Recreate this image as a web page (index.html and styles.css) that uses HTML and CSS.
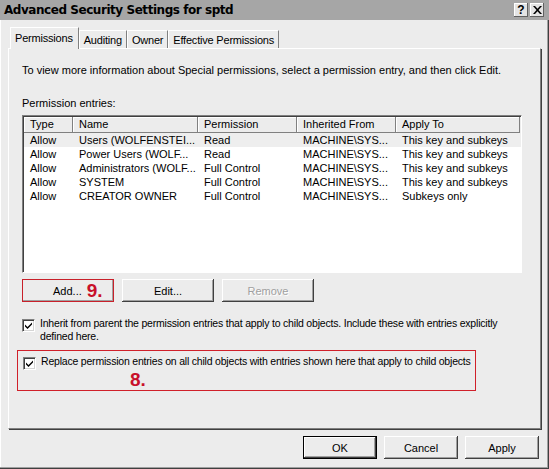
FILE: index.html
```html
<!DOCTYPE html>
<html lang="en">
<head>
    <meta charset="UTF-8">
    <meta name="viewport" content="width=device-width, initial-scale=1.0">
    <title>Advanced Security Settings for sptd</title>
    <link rel="stylesheet" href="styles.css">
</head>
<body>
    <div class="window">
        <div class="titlebar">
            <span class="title">Advanced Security Settings for sptd</span>
            <div class="caption-buttons">
                <span class="cap-btn">?</span>
                <span class="cap-btn">
                    <svg width="9" height="8" viewBox="0 0 9 8"><path d="M0 0h2l2.5 2.8L7 0h2L5.5 4 9 8H7L4.5 5.2 2 8H0l3.5-4z" fill="#000"/></svg>
                </span>
            </div>
        </div>

        <div class="tabs">
            <div class="tab active">Permissions</div>
            <div class="tab">Auditing</div>
            <div class="tab">Owner</div>
            <div class="tab">Effective Permissions</div>
        </div>

        <div class="panel">
            <p class="intro">To view more information about Special permissions, select a permission entry, and then click Edit.</p>
            <div class="label">Permission entries:</div>

            <div class="listbox">
                <div class="list-head">
                    <div class="head-cell">Type</div>
                    <div class="head-cell">Name</div>
                    <div class="head-cell">Permission</div>
                    <div class="head-cell">Inherited From</div>
                    <div class="head-cell">Apply To</div>
                </div>
                <div class="row selected">
                    <span>Allow</span><span>Users (WOLFENSTEI...</span><span>Read</span><span>MACHINE\SYS...</span><span>This key and subkeys</span>
                </div>
                <div class="row">
                    <span>Allow</span><span>Power Users (WOLF...</span><span>Read</span><span>MACHINE\SYS...</span><span>This key and subkeys</span>
                </div>
                <div class="row">
                    <span>Allow</span><span>Administrators (WOLF...</span><span>Full Control</span><span>MACHINE\SYS...</span><span>This key and subkeys</span>
                </div>
                <div class="row">
                    <span>Allow</span><span>SYSTEM</span><span>Full Control</span><span>MACHINE\SYS...</span><span>This key and subkeys</span>
                </div>
                <div class="row">
                    <span>Allow</span><span>CREATOR OWNER</span><span>Full Control</span><span>MACHINE\SYS...</span><span>Subkeys only</span>
                </div>
            </div>

            <div class="list-buttons">
                <div class="btn marked">Add... <span class="note">9.</span></div>
                <div class="btn">Edit...</div>
                <div class="btn disabled">Remove</div>
            </div>

            <div class="check">
                <span class="box">
                    <svg width="7" height="7" viewBox="0 0 7 7"><path d="M0 2.5l2.5 2.5L7 0.5V2.5L2.5 7 0 4.5z" fill="#000"/></svg>
                </span>
                <span class="check-text">Inherit from parent the permission entries that apply to child objects. Include these with entries explicitly<br>defined here.</span>
            </div>

            <div class="marked-area">
                <div class="check">
                    <span class="box">
                        <svg width="7" height="7" viewBox="0 0 7 7"><path d="M0 2.5l2.5 2.5L7 0.5V2.5L2.5 7 0 4.5z" fill="#000"/></svg>
                    </span>
                    <span class="check-text">Replace permission entries on all child objects with entries shown here that apply to child objects</span>
                </div>
                <div class="note big">8.</div>
            </div>
        </div>

        <div class="footer">
            <div class="btn default">OK</div>
            <div class="btn">Cancel</div>
            <div class="btn">Apply</div>
        </div>
    </div>
</body>
</html>
```

FILE: styles.css
```css
body {
    margin: 0;
    font-family: "Liberation Sans", Arial, sans-serif;
    font-size: 11px;
    color: #000000;
    background-color: #ececec;
}

.window {
    width: 549px;
    height: 469px;
    box-sizing: border-box;
    background-color: #ececec;
    box-shadow: inset -1px -1px #404040, inset -2px -2px #a0a0a0, inset 1px 0 #ffffff;
    overflow: hidden;
}

.titlebar {
    height: 20px;
    background-color: #a6a6a6;
    display: flex;
    justify-content: space-between;
    align-items: center;
    padding: 0 5px 0 4px;
}

.title {
    font-family: "DejaVu Sans", sans-serif;
    font-weight: bold;
    font-size: 12px;
    letter-spacing: -0.45px;
    color: #000000;
}

.caption-buttons {
    display: flex;
    gap: 2px;
}

.cap-btn {
    width: 14px;
    height: 14px;
    background-color: #e4e4e4;
    display: flex;
    justify-content: center;
    align-items: center;
    font-weight: bold;
    font-size: 12px;
    box-shadow: inset -1px -1px #606060, inset 1px 1px #ffffff;
}

.tabs {
    display: flex;
    align-items: flex-end;
    height: 28px;
    padding-left: 10px;
}

.tab {
    height: 17px;
    line-height: 19px;
    padding: 0 4px;
    letter-spacing: -0.2px;
    border-top: 1px solid #ffffff;
    border-left: 1px solid #ffffff;
    border-right: 1px solid #808080;
    color: #000000;
}

.tab.active {
    height: 19px;
    line-height: 21px;
    padding: 0 5px 2px 4px;
    margin-bottom: -1px;
    background-color: #ececec;
    position: relative;
    z-index: 1;
}

.panel {
    margin: 0 8px 0 8px;
    height: 381px;
    box-sizing: border-box;
    border-top: 1px solid #ffffff;
    border-left: 1px solid #ffffff;
    border-right: 1px solid #808080;
    border-bottom: 1px solid #808080;
    box-shadow: 1px 1px #404040;
    padding: 15px 0 0 13px;
}

.intro {
    margin: 0;
    line-height: 13px;
}

.label {
    margin-top: 20px;
    line-height: 13px;
}

.listbox {
    margin-top: 5px;
    width: 500px;
    height: 158px;
    box-sizing: border-box;
    background-color: #ffffff;
    border-top: 1px solid #808080;
    border-left: 1px solid #808080;
    border-right: 1px solid #ffffff;
    border-bottom: 1px solid #ffffff;
    box-shadow: inset 1px 1px #404040;
    padding: 1px 0 0 1px;
}

.list-head,
.row {
    display: grid;
    grid-template-columns: 49px 125px 99px 99px 124px;
}

.list-head {
    height: 16px;
    background-color: #ececec;
}

.head-cell {
    line-height: 15px;
    padding-left: 6px;
    box-shadow: inset -1px -1px #808080, inset 1px 1px #ffffff;
}

.row {
    height: 14px;
    line-height: 14px;
}

.row span {
    padding-left: 6px;
    white-space: nowrap;
    overflow: hidden;
}

.row.selected {
    background-color: #eeeeee;
}

.list-buttons {
    display: flex;
    gap: 8px;
    margin-top: 6px;
}

.btn {
    width: 92px;
    height: 23px;
    box-sizing: border-box;
    display: flex;
    justify-content: center;
    align-items: center;
    background-color: #ececec;
    box-shadow: inset -1px -1px #404040, inset 1px 1px #ffffff, inset -2px -2px #a0a0a0;
}

.btn.disabled {
    color: #a0a0a0;
    text-shadow: 1px 1px #ffffff;
}

.btn.marked {
    justify-content: flex-start;
    padding-left: 31px;
    box-shadow: inset 0 0 0 1px #c8202a, inset -2px -2px #a0a0a0;
}

.note {
    color: #c8102a;
    font-weight: bold;
    font-size: 19px;
    margin-left: 5px;
}

.check {
    display: flex;
    align-items: flex-start;
    gap: 5px;
    margin-top: 14px;
}

.box {
    flex: none;
    width: 13px;
    height: 13px;
    box-sizing: border-box;
    margin-top: 3px;
    background-color: #ffffff;
    border-top: 1px solid #808080;
    border-left: 1px solid #808080;
    border-right: 1px solid #ffffff;
    border-bottom: 1px solid #ffffff;
    box-shadow: inset 1px 1px #404040, inset -1px -1px #d4d4d4;
    display: flex;
    justify-content: center;
    align-items: center;
}

.check-text {
    font-size: 10.5px;
    line-height: 13px;
    white-space: nowrap;
    letter-spacing: -0.2px;
    padding-top: 1px;
}

.marked-area {
    margin: 7px 0 0 -5px;
    width: 459px;
    height: 41px;
    box-sizing: border-box;
    border: 1px solid #d0202a;
    padding: 0 0 0 5px;
}

.marked-area .check {
    margin-top: 3px;
}

.note.big {
    margin: 1px 0 0 107px;
    line-height: 18px;
}

.footer {
    display: flex;
    justify-content: flex-end;
    gap: 7px;
    padding: 7px 10px 0 0;
}

.footer .btn {
    width: 74px;
}

.btn.default {
    box-shadow: inset 0 0 0 1px #000000, inset -2px -2px #404040, inset 2px 2px #ffffff, inset -3px -3px #a0a0a0;
}
```
